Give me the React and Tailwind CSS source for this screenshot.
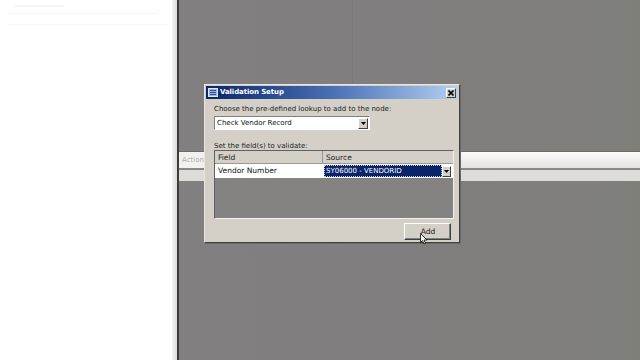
import React from 'react';

const Dialog = () => {
    return (
        <div className="absolute left-[25px] top-[84px] w-[256px] h-[159px] bg-[#d4d0c8] border border-t-[#e8e6e1] border-l-[#e8e6e1] border-r-[#404040] border-b-[#404040] shadow-[1px_1px_0_#6a6a6a] p-[1px]">
            {/* Title bar */}
            <div className="h-[13px] flex items-center justify-between pl-[2px] pr-[2px] bg-gradient-to-r from-[#0a246a] via-[#4a70b4] to-[#b4d0f2]">
                <div className="flex items-center gap-[2px]">
                    <div className="w-[10px] h-[9px] bg-[#9cb4dc] border border-[#dde8f6] flex flex-col justify-center gap-[1px] px-[1px]">
                        <div className="h-px bg-[#2a4a8a]"></div>
                        <div className="h-px bg-[#2a4a8a]"></div>
                        <div className="h-px bg-[#2a4a8a]"></div>
                    </div>
                    <span className="text-white font-bold text-[7px] leading-none tracking-[-0.1px]">Validation Setup</span>
                </div>
                <div className="w-[10px] h-[10px] bg-[#d4d0c8] border border-t-white border-l-white border-r-[#404040] border-b-[#404040] flex items-center justify-center">
                    <svg width="6" height="6" viewBox="0 0 6 6">
                        <path d="M0.5 0.5 L5.5 5.5 M5.5 0.5 L0.5 5.5" stroke="#000" strokeWidth="1.6" />
                    </svg>
                </div>
            </div>

            <div className="pl-[8px] pr-[6px] pt-[7px]">
                <div className="text-[7px] leading-none text-[#222] h-[9px]">Choose the pre-defined lookup to add to the node:</div>
                <div className="mt-[1px] w-[156px] h-[14px] bg-white border border-t-[#808080] border-l-[#808080] border-r-white border-b-white flex items-center justify-between">
                    <span className="text-[7px] text-[#111] pl-[2px]">Check Vendor Record</span>
                    <div className="w-[10px] h-[11px] mr-[1px] bg-[#d4d0c8] border border-t-white border-l-white border-r-[#404040] border-b-[#404040] flex items-center justify-center">
                        <svg width="5" height="3" viewBox="0 0 5 3"><path d="M0 0 H5 L2.5 3 Z" fill="#000" /></svg>
                    </div>
                </div>

                <div className="mt-[13px] text-[7px] leading-none text-[#222] h-[7px]">Set the field(s) to validate:</div>
                <div className="w-[240px] h-[69px] border border-t-[#606060] border-l-[#606060] border-r-[#f0f0f0] border-b-[#f0f0f0] bg-[#858382] flex flex-col">
                    <div className="h-[13px] flex bg-[#d4d0c8] border-b border-[#9a9890]">
                        <div className="w-[108px] border-r border-[#9a9890] text-[7.5px] leading-[13px] pl-[3px] text-[#222]">Field</div>
                        <div className="flex-1 text-[7.5px] leading-[13px] pl-[3px] text-[#222]">Source</div>
                    </div>
                    <div className="h-[14px] flex">
                        <div className="w-[108px] bg-white text-[7.5px] leading-[14px] pl-[3px] text-[#111]">Vendor Number</div>
                        <div className="flex-1 flex items-center bg-white pr-[2px]">
                            <div className="flex-1 h-[12px] ml-[1px] bg-[#0a246a] border border-dotted border-[#c0c8e0] text-white text-[7px] leading-[10px] pl-[1px]">SY06000 - VENDORID</div>
                            <div className="w-[9px] h-[11px] bg-[#d4d0c8] border border-t-white border-l-white border-r-[#404040] border-b-[#404040] flex items-center justify-center">
                                <svg width="5" height="3" viewBox="0 0 5 3"><path d="M0 0 H5 L2.5 3 Z" fill="#000" /></svg>
                            </div>
                        </div>
                    </div>
                </div>

                <div className="flex justify-end mt-[4px] pr-[1px]">
                    <div className="relative w-[47px] h-[17px] bg-[#d4d0c8] border border-t-white border-l-white border-r-[#404040] border-b-[#404040] shadow-[inset_-1px_-1px_0_#808080] flex items-center justify-center">
                        <span className="text-[7.5px] text-[#111] pl-[1px]">Add</span>
                        <svg className="absolute left-[15px] top-[9px]" width="8" height="12" viewBox="0 0 8 12">
                            <path d="M0.5 0.5 L0.5 9.5 L2.5 7.5 L4 11 L5.5 10.3 L4 7 L7 7 Z" fill="#fff" stroke="#000" strokeWidth="0.8" />
                        </svg>
                    </div>
                </div>
            </div>
        </div>
    );
};

export default function App() {
    return (
        <div className="w-[640px] h-[360px] flex overflow-hidden font-['DejaVu_Sans',sans-serif] bg-white">
            {/* Left white panel */}
            <div className="w-[172px] h-full bg-white flex flex-col">
                <div className="h-[5px]"></div>
                <div className="ml-[14px] w-[50px] h-[2px] bg-[#f6f6f6]"></div>
                <div className="mt-[6px] ml-[8px] w-[150px] h-px bg-[#f5f5f5]"></div>
                <div className="mt-[10px] ml-[8px] w-[160px] h-px bg-[#f5f5f5]"></div>
            </div>
            <div className="w-[5px] h-full bg-gradient-to-r from-[#f4f4f4] to-[#dcdcdc]"></div>
            <div className="w-[2px] h-full bg-[#3c3c3c]"></div>

            {/* Gray workspace */}
            <div className="relative flex-1 h-full bg-gradient-to-r from-[#817f80] via-[#807e7e] to-[#7f7f7a] flex flex-col">
                <div className="h-[151px] flex">
                    <div className="w-[173px]"></div>
                    <div className="w-px bg-[#7a7877]"></div>
                </div>
                <div className="h-px bg-[#6e6c6b]"></div>
                <div className="h-[16px] flex bg-gradient-to-b from-[#fbfbfa] to-[#e4e2df]">
                    <div className="w-[26px] bg-[#f2f1ef] border-r border-[#b8b6b3] text-[7px] leading-[16px] pl-[3px] text-[#b0aeab]">Action</div>
                </div>
                <div className="h-[2px] bg-[#8a8886]"></div>
                <div className="h-[11px] flex bg-[#dedcd8]">
                    <div className="w-[26px] border-r border-[#b8b6b3]"></div>
                </div>
                <div className="flex-1"></div>

                <Dialog />
            </div>
        </div>
    );
}
